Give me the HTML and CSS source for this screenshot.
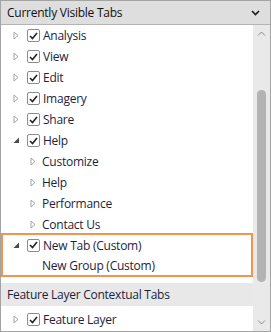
FILE: index.html
```html
<!DOCTYPE html>
<html>
<head>
<meta charset="utf-8">
<link rel="stylesheet" href="styles.css">
</head>
<body>
<div class="panel">
  <div class="header">
    <span class="header-title">Currently Visible Tabs</span>
    <svg class="header-chev" width="9" height="6" viewBox="0 0 9 6"><path d="M1 1 L4.5 4.5 L8 1" fill="none" stroke="#1a1a1a" stroke-width="1.6"/></svg>
  </div>
  <div class="body">
    <div class="tree">
      <div class="row"><span class="exp"><svg width="6" height="9" viewBox="0 0 6 9"><path d="M1 1 L5 4.5 L1 8 Z" fill="none" stroke="#a6a6a6" stroke-width="1"/></svg></span><span class="cb"><svg width="9" height="8" viewBox="0 0 9 8"><path d="M1 4 L3.5 6.5 L8 1" fill="none" stroke="#222" stroke-width="1.6"/></svg></span><span class="label">Analysis</span></div>
      <div class="row"><span class="exp"><svg width="6" height="9" viewBox="0 0 6 9"><path d="M1 1 L5 4.5 L1 8 Z" fill="none" stroke="#a6a6a6" stroke-width="1"/></svg></span><span class="cb"><svg width="9" height="8" viewBox="0 0 9 8"><path d="M1 4 L3.5 6.5 L8 1" fill="none" stroke="#222" stroke-width="1.6"/></svg></span><span class="label">View</span></div>
      <div class="row"><span class="exp"><svg width="6" height="9" viewBox="0 0 6 9"><path d="M1 1 L5 4.5 L1 8 Z" fill="none" stroke="#a6a6a6" stroke-width="1"/></svg></span><span class="cb"><svg width="9" height="8" viewBox="0 0 9 8"><path d="M1 4 L3.5 6.5 L8 1" fill="none" stroke="#222" stroke-width="1.6"/></svg></span><span class="label">Edit</span></div>
      <div class="row"><span class="exp"><svg width="6" height="9" viewBox="0 0 6 9"><path d="M1 1 L5 4.5 L1 8 Z" fill="none" stroke="#a6a6a6" stroke-width="1"/></svg></span><span class="cb"><svg width="9" height="8" viewBox="0 0 9 8"><path d="M1 4 L3.5 6.5 L8 1" fill="none" stroke="#222" stroke-width="1.6"/></svg></span><span class="label">Imagery</span></div>
      <div class="row"><span class="exp"><svg width="6" height="9" viewBox="0 0 6 9"><path d="M1 1 L5 4.5 L1 8 Z" fill="none" stroke="#a6a6a6" stroke-width="1"/></svg></span><span class="cb"><svg width="9" height="8" viewBox="0 0 9 8"><path d="M1 4 L3.5 6.5 L8 1" fill="none" stroke="#222" stroke-width="1.6"/></svg></span><span class="label">Share</span></div>
      <div class="row"><span class="exp"><svg width="7" height="7" viewBox="0 0 7 7"><path d="M6 0.5 L6 6 L0.5 6 Z" fill="#4a4a4a"/></svg></span><span class="cb"><svg width="9" height="8" viewBox="0 0 9 8"><path d="M1 4 L3.5 6.5 L8 1" fill="none" stroke="#222" stroke-width="1.6"/></svg></span><span class="label">Help</span></div>
      <div class="row child"><span class="exp"><svg width="6" height="9" viewBox="0 0 6 9"><path d="M1 1 L5 4.5 L1 8 Z" fill="none" stroke="#a6a6a6" stroke-width="1"/></svg></span><span class="label">Customize</span></div>
      <div class="row child"><span class="exp"><svg width="6" height="9" viewBox="0 0 6 9"><path d="M1 1 L5 4.5 L1 8 Z" fill="none" stroke="#a6a6a6" stroke-width="1"/></svg></span><span class="label">Help</span></div>
      <div class="row child"><span class="exp"><svg width="6" height="9" viewBox="0 0 6 9"><path d="M1 1 L5 4.5 L1 8 Z" fill="none" stroke="#a6a6a6" stroke-width="1"/></svg></span><span class="label">Performance</span></div>
      <div class="row child"><span class="exp"><svg width="6" height="9" viewBox="0 0 6 9"><path d="M1 1 L5 4.5 L1 8 Z" fill="none" stroke="#a6a6a6" stroke-width="1"/></svg></span><span class="label">Contact Us</span></div>
      <div class="highlight">
        <div class="row"><span class="exp"><svg width="7" height="7" viewBox="0 0 7 7"><path d="M6 0.5 L6 6 L0.5 6 Z" fill="#4a4a4a"/></svg></span><span class="cb"><svg width="9" height="8" viewBox="0 0 9 8"><path d="M1 4 L3.5 6.5 L8 1" fill="none" stroke="#222" stroke-width="1.6"/></svg></span><span class="label">New Tab (Custom)</span></div>
        <div class="row group"><span class="label">New Group (Custom)</span></div>
      </div>
      <div class="section">Feature Layer Contextual Tabs</div>
      <div class="row last"><span class="exp"><svg width="6" height="9" viewBox="0 0 6 9"><path d="M1 1 L5 4.5 L1 8 Z" fill="none" stroke="#a6a6a6" stroke-width="1"/></svg></span><span class="cb"><svg width="9" height="8" viewBox="0 0 9 8"><path d="M1 4 L3.5 6.5 L8 1" fill="none" stroke="#222" stroke-width="1.6"/></svg></span><span class="label">Feature Layer</span></div>
    </div>
    <div class="scrollbar">
      <svg class="sb-arrow" width="9" height="5" viewBox="0 0 9 5"><path d="M1 4.5 L4.5 1 L8 4.5" fill="none" stroke="#8a8a8a" stroke-width="1"/></svg>
      <div class="track"><div class="thumb"></div></div>
      <svg class="sb-arrow" width="9" height="5" viewBox="0 0 9 5"><path d="M1 0.5 L4.5 4 L8 0.5" fill="none" stroke="#8a8a8a" stroke-width="1"/></svg>
    </div>
  </div>
</div>
</body>
</html>
```
FILE: styles.css
```css
html, body {
  margin: 0;
  padding: 0;
  background: #ffffff;
}
.panel {
  width: 271px;
  height: 332px;
  box-sizing: border-box;
  border: 1px solid #a3a3a3;
  display: flex;
  flex-direction: column;
  font-family: "Open Sans", "Noto Sans", sans-serif;
  font-size: 12px;
  letter-spacing: -0.25px;
  color: #1e1e3c;
  overflow: hidden;
}
.header {
  height: 23px;
  flex: none;
  background: #dedede;
  border-bottom: 1px solid #b4b4b4;
  display: flex;
  align-items: center;
  justify-content: space-between;
  padding: 0 10px 0 6px;
  color: #111;
}
.header-chev {
  display: block;
}
.body {
  flex: 1;
  display: flex;
  min-height: 0;
}
.tree {
  width: 252px;
  flex: none;
  display: flex;
  flex-direction: column;
}
.row {
  height: 21px;
  display: flex;
  align-items: center;
  flex: none;
}
.exp {
  width: 26px;
  padding-left: 12px;
  box-sizing: border-box;
  display: flex;
  align-items: center;
}
.exp svg {
  display: block;
}
.child .exp {
  padding-left: 29px;
  width: 41px;
}
.cb {
  width: 11px;
  height: 11px;
  border: 1px solid #8c8c8c;
  border-radius: 2px;
  background: #fff;
  display: flex;
  align-items: center;
  justify-content: center;
  margin-right: 3px;
}
.cb svg {
  display: block;
}
.label {
  white-space: nowrap;
}
.group .label {
  padding-left: 41px;
}
.highlight {
  border: 2px solid #ef9550;
  margin: -2px 0 0 0;
  flex: none;
}
.highlight .row:first-child .exp {
  padding-left: 10px;
  width: 24px;
}
.highlight .group .label {
  padding-left: 39px;
}
.highlight .row {
  height: 20px;
}
.section {
  margin-top: 6px;
  height: 23px;
  background: #e8e8e8;
  display: flex;
  align-items: center;
  padding-left: 6px;
  flex: none;
}
.last {
  margin-top: 3px;
}
.scrollbar {
  width: 17px;
  flex: none;
  background: #e9e9e9;
  display: flex;
  flex-direction: column;
  align-items: center;
}
.sb-arrow {
  display: block;
  flex: none;
  margin: 6px 0;
}
.track {
  flex: 1;
  width: 100%;
  display: flex;
  flex-direction: column;
  align-items: center;
}
.thumb {
  width: 9px;
  margin-top: 48px;
  height: 192px;
  background: #b3b3b3;
  border-radius: 5px;
}
```
